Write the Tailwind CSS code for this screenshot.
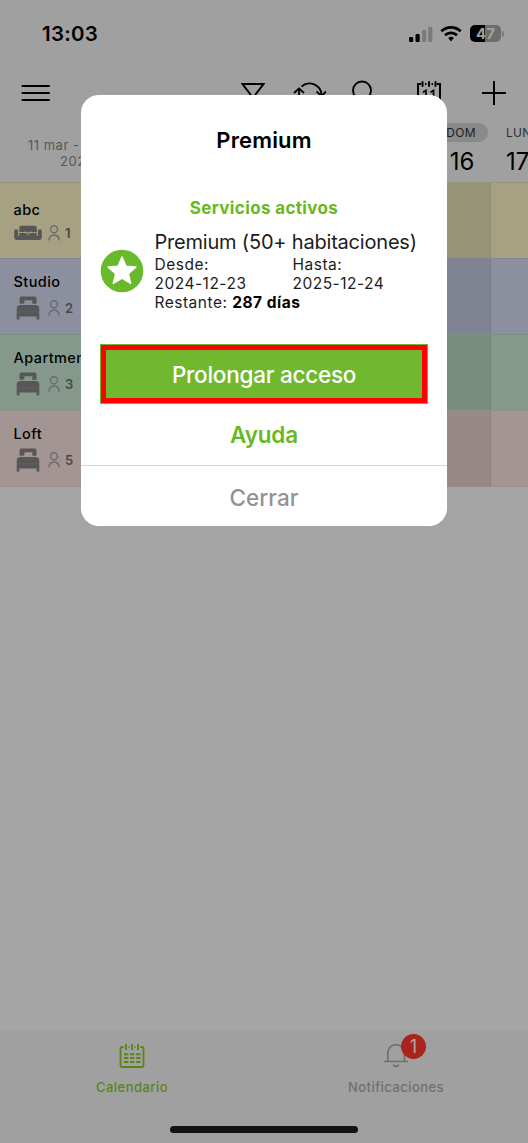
<!DOCTYPE html>
<html lang="es">
<head>
<meta charset="utf-8">
<meta name="viewport" content="width=device-width">
<title>Premium</title>
<script src="https://cdn.jsdelivr.net/npm/@tailwindcss/browser@4"></script>
</head>
<body class="bg-[#a5a5a5] font-['Inter',sans-serif] text-black">
<svg class="hidden">
  <symbol id="person" viewBox="0 0 12 16"><circle cx="6" cy="4.300" r="3.500" fill="none" stroke="currentColor" stroke-width="1.400"/><path d="M.9 15.400c0-3.300 2-5.400 5.100-5.400s5.100 2.100 5.100 5.400" fill="none" stroke="currentColor" stroke-width="1.400"/></symbol>
  <symbol id="bed" viewBox="0 0 24 24"><path fill="currentColor" d="M6 .5h12.500a2 2 0 0 1 2 2V7.800h-4.200V4.300H8.500V6.600l-1.200 1.200H3.600V2.500a2 2 0 0 1 2.400-2z"/><path fill="currentColor" d="M4.200 8.900h15.600a3.500 3.500 0 0 1 3.500 3.500v11h-2.700v-3H3.400v3H.7v-11a3.500 3.500 0 0 1 3.500-3.500z"/><path d="M1 15.800h22" stroke="#808080" stroke-opacity=".35" stroke-width=".7"/></symbol>
  <symbol id="sofa" viewBox="0 0 28 16"><path fill="currentColor" d="M7.300.8h13.500a2 2 0 0 1 2 2v4.100l-4.500.3-2-.6-2.600.8-3-.8-1.800.6-3.600-.4v-4a2 2 0 0 1 2-2zM5.200 7.900l4 .2 4.300.4v2.800H5.200zM14.200 8.500l4.500-.4 4.100-.2v3.400h-8.600z"/><path fill="currentColor" d="M1.200 4.600h1.900a1 1 0 0 1 1 1v5.300h19.800V5.600a1 1 0 0 1 1-1h1.900a1 1 0 0 1 1 1v6.400a3 3 0 0 1-3 3H3.200a3 3 0 0 1-3-3V5.600a1 1 0 0 1 1-1z"/></symbol>
</svg>
<div class="relative flex h-[1143px] w-[528px] flex-col overflow-hidden">
  <header class="flex h-[182px] flex-col bg-[#a0a0a0]">
    <div class="flex h-[67px] items-center justify-between pl-[42px] pr-[24px]">
      <span class="pt-px text-[20.500px] font-semibold tracking-[0.250px]">13:03</span>
      <div class="flex items-center">
        <svg class="h-[18px] w-[25px]" viewBox="0 0 25 18"><rect x="0" y="12" width="4.200" height="5" rx="1"/><rect x="6.500" y="9" width="4.200" height="8" rx="1"/><rect x="13" y="5" width="4.200" height="12" rx="1" fill="#7b7b7b"/><rect x="19.200" y="1.800" width="4.200" height="15.200" rx="1" fill="#7b7b7b"/></svg>
        <svg class="ml-[6px] h-[18px] w-[22px]" viewBox="0 0 22 18" fill="none" stroke="#000" stroke-width="2.800"><path d="M1.300 6.300a14 14 0 0 1 19.400 0M5 10.200a8.800 8.800 0 0 1 12 0"/><path d="M8.200 13a4.200 4.200 0 0 1 5.600 0L11 16.600z" fill="#000" stroke="none"/></svg>
        <div class="ml-[8px] flex h-[17px] w-[31px] items-center justify-center rounded-[5px] bg-linear-to-r from-black from-[47%] to-[#6d6d6d] to-[47%] text-[15px] font-bold leading-none text-[#a0a0a0]">47</div>
        <div class="ml-px h-[6px] w-[2px] rounded-r bg-[#7b7b7b]"></div>
      </div>
    </div>
    <div class="flex h-[52px] items-center justify-between pl-[21px] pr-[21px]">
      <svg class="h-[20px] w-[30px]" viewBox="0 0 30 20" stroke="#000" stroke-width="2.200" stroke-linecap="round"><path d="M1.500 3h26.500M1.500 10h26.500M1.500 17h26.500"/></svg>
      <div class="flex items-center">
        <svg class="h-[26px] w-[24px]" viewBox="0 0 24 26" fill="none" stroke="#000" stroke-width="2"><path d="M1.500 4h21l-8 10.500v8l-5-3v-5z"/></svg>
        <svg class="ml-[28px] h-[26px] w-[34px]" viewBox="0 0 34 26" fill="none" stroke="#000" stroke-width="1.800"><path d="M8.500 6.500A12 12 0 0 1 28.500 15M1 13l5-4.500L11 13M6 9v6M23.500 11.500l5 4.500 4.500-4.500M6 15a11.500 11.500 0 0 0 20 5"/></svg>
        <svg class="ml-[24px] h-[26px] w-[24px]" viewBox="0 0 24 26" fill="none" stroke="#000" stroke-width="1.900"><circle cx="11" cy="10.500" r="9"/><path d="m17 17 6 7"/></svg>
        <svg class="ml-[41px] h-[26px] w-[26px]" viewBox="0 0 26 26" fill="none" stroke="#000" stroke-width="2"><path d="M5 4H2v20h22V4h-3M6.500 1.300v5.400M13 1.300v5.400M19.500 1.300v5.400M9 4h1.500M15.500 4H17"/><path d="M7 12.200l3-1.800V19M14.500 12.200l3-1.800V19" stroke-width="1.700"/></svg>
        <svg class="ml-[39px] h-[26px] w-[26px]" viewBox="0 0 26 26" stroke="#000" stroke-width="2"><path d="M13 1v24M1 13h24"/></svg>
      </div>
    </div>
    <div class="flex h-[63px]">
      <div class="w-[108px] whitespace-nowrap pl-[28px] pt-[18px] text-[13px] leading-[16px] tracking-[0.500px] text-[#575757]">11 mar -<br><span class="block pl-[32px]">2025</span></div>
      <div class="ml-auto flex">
        <div class="flex w-[60px] flex-col items-center pt-[4px]">
          <span class="flex h-[19px] w-[54px] items-center justify-center rounded-full bg-[#8a8a8a] text-[12px] tracking-[0.300px] text-[#202020]">DOM</span>
          <span class="mt-[6px] pl-[2px] text-[24px] leading-[28px]">16</span>
        </div>
        <div class="flex w-[37px] flex-col pl-[15px] pt-[4px]">
          <span class="flex h-[19px] items-center text-[12px] tracking-[0.300px] text-[#303030]">LUN</span>
          <span class="mt-[6px] text-[24px] leading-[28px]">17</span>
        </div>
      </div>
    </div>
  </header>
  <main class="flex flex-1 flex-col">
    <section class="flex h-[76px] border-t border-[#96947f] bg-[#a5a182]">
      <div class="w-[446px] pl-[13.500px] pt-[18px]">
        <p class="text-[14.500px] font-medium leading-[18px] tracking-[0.420px]">abc</p>
        <div class="mt-[4px] flex items-center text-[#575757]"><svg class="h-[16px] w-[28px]"><use href="#sofa"/></svg><svg class="ml-[6.500px] h-[16px] w-[12px] text-[#6b6b6b]"><use href="#person"/></svg><span class="ml-[5px] text-[13px] font-semibold leading-[20px] text-[#484848]">1</span></div>
      </div>
      <div class="w-[45px] border-r border-[#8e8a6e] bg-[#979376]"></div>
    </section>
    <section class="flex h-[76px] border-t border-[#838795] bg-[#8c909e]">
      <div class="w-[446px] pl-[13.500px] pt-[14px]">
        <p class="text-[14.500px] font-medium leading-[18px] tracking-[0.420px]">Studio</p>
        <div class="mt-[5px] flex items-center pl-[2px] text-[#575757]"><svg class="h-[24px] w-[24px]"><use href="#bed"/></svg><svg class="ml-[8.500px] h-[16px] w-[12px] text-[#6b6b6b]"><use href="#person"/></svg><span class="ml-[5px] text-[13px] font-semibold leading-[20px] text-[#484848]">2</span></div>
      </div>
      <div class="w-[45px] border-r border-[#787b89] bg-[#808391]"></div>
    </section>
    <section class="flex h-[76px] border-t border-[#7b9083] bg-[#84998c]">
      <div class="w-[446px] pl-[13.500px] pt-[14px]">
        <p class="text-[14.500px] font-medium leading-[18px] tracking-[0.420px]">Apartment</p>
        <div class="mt-[5px] flex items-center pl-[2px] text-[#575757]"><svg class="h-[24px] w-[24px]"><use href="#bed"/></svg><svg class="ml-[8.500px] h-[16px] w-[12px] text-[#6b6b6b]"><use href="#person"/></svg><span class="ml-[5px] text-[13px] font-semibold leading-[20px] text-[#484848]">3</span></div>
      </div>
      <div class="w-[45px] border-r border-[#718478] bg-[#798c80]"></div>
    </section>
    <section class="flex h-[77px] border-y border-[#998c8b] bg-[#a39594]">
      <div class="w-[446px] pl-[13.500px] pt-[14px]">
        <p class="text-[14.500px] font-medium leading-[18px] tracking-[0.420px]">Loft</p>
        <div class="mt-[5px] flex items-center pl-[2px] text-[#575757]"><svg class="h-[24px] w-[24px]"><use href="#bed"/></svg><svg class="ml-[8.500px] h-[16px] w-[12px] text-[#6b6b6b]"><use href="#person"/></svg><span class="ml-[5px] text-[13px] font-semibold leading-[20px] text-[#484848]">5</span></div>
      </div>
      <div class="w-[45px] border-r border-[#8d8180] bg-[#968988]"></div>
    </section>
  </main>
  <footer class="flex h-[112px] flex-col items-center bg-[#a0a0a0]">
    <nav class="flex h-[95px] w-full">
      <div class="flex flex-1 flex-col items-center pt-[12px] text-[#588516]">
        <svg class="h-[26px] w-[26px]" viewBox="0 0 26 26" fill="none" stroke="currentColor" stroke-width="1.800"><path d="M4.500 4H3a1.500 1.500 0 0 0-1.500 1.500v17A1.500 1.500 0 0 0 3 24h20a1.500 1.500 0 0 0 1.500-1.500v-17A1.500 1.500 0 0 0 23 4h-1.500M7 1v6M13 1v6M19 1v6M9.500 4h1M15.500 4h1"/><path d="M5 11.200h16.500M5 15h16.500M5 19h16.500" stroke-width="2" stroke-dasharray="4.300 1.800"/></svg>
        <span class="mt-[9px] text-[13px] font-medium leading-[18px] tracking-[0.480px]">Calendario</span>
      </div>
      <div class="flex flex-1 flex-col items-center pt-[12px] text-[#6f6f6f]">
        <div class="relative h-[26px] w-[26px]">
          <svg class="h-[26px] w-[26px]" viewBox="0 0 26 26" fill="none" stroke="currentColor" stroke-width="1.700"><path d="M1 18.500h24M4.800 18.500V10a8.200 8.200 0 0 1 16.600 0v8.500M10.500 21.500a2.600 2.600 0 0 0 5 0"/></svg>
          <span class="absolute -top-[9px] left-[18px] flex h-[25px] w-[25px] items-center justify-center rounded-full bg-[#a9241d] text-[18px] text-[#b5a5a5]">1</span>
        </div>
        <span class="mt-[9px] text-[13px] font-medium leading-[18px] tracking-[0.450px]">Notificaciones</span>
      </div>
    </nav>
    <div class="h-[7px] w-[188px] rounded-full bg-[#121212]"></div>
  </footer>

  <div class="absolute left-[81px] top-[95px] flex h-[431px] w-[366px] flex-col rounded-[18px] bg-white" role="dialog">
    <h1 class="mt-[31px] text-center text-[22px] font-semibold leading-[28px] tracking-[0.150px]">Premium</h1>
    <h2 class="mt-[43px] text-center text-[17px] font-bold leading-[22px] tracking-[0.350px] text-[#6ab81f]">Servicios activos</h2>
    <div class="mt-[10px] flex items-center pl-[19px] text-[#1c1c1c]">
      <svg class="h-[44px] w-[44px] shrink-0" viewBox="0 0 44 44"><circle cx="22" cy="22" r="21.300" fill="#69b92d"/><path d="m22 8 4 9.300 9.800.8-7.500 6.500 2.400 9.800-8.700-5.300-8.700 5.300 2.400-9.800-7.500-6.500 9.800-.8z" fill="#fff" stroke="#fff" stroke-width="1.500" stroke-linejoin="round"/></svg>
      <div class="ml-[10.500px] flex-1 whitespace-nowrap text-[15.500px] leading-[19px] tracking-[0.500px]">
        <p class="text-[20px] leading-[26px] tracking-[-0.200px]">Premium (50+ habitaciones)</p>
        <div class="flex"><p class="w-[138px]">Desde:<br>2024-12-23</p><p>Hasta:<br>2025-12-24</p></div>
        <p>Restante: <b class="font-bold text-black">287 días</b></p>
      </div>
    </div>
    <button class="ml-[19px] mt-[32px] flex h-[60px] w-[328px] shrink-0 bg-[#70b92f] p-px"><span class="flex h-full w-full items-center justify-center border-[5px] border-[#ff0000] pt-[2px] text-[22.500px] font-medium tracking-[-0.250px] text-white">Prolongar acceso</span></button>
    <button class="mt-[15px] h-[32px] text-[22.500px] font-semibold leading-[32px] tracking-[-0.200px] text-[#6ab81f]">Ayuda</button>
    <button class="mt-[14px] flex-1 border-t border-[#d5d5d5] pt-[3px] text-[22.500px] font-medium text-[#929292]">Cerrar</button>
  </div>
</div>
</body>
</html>
